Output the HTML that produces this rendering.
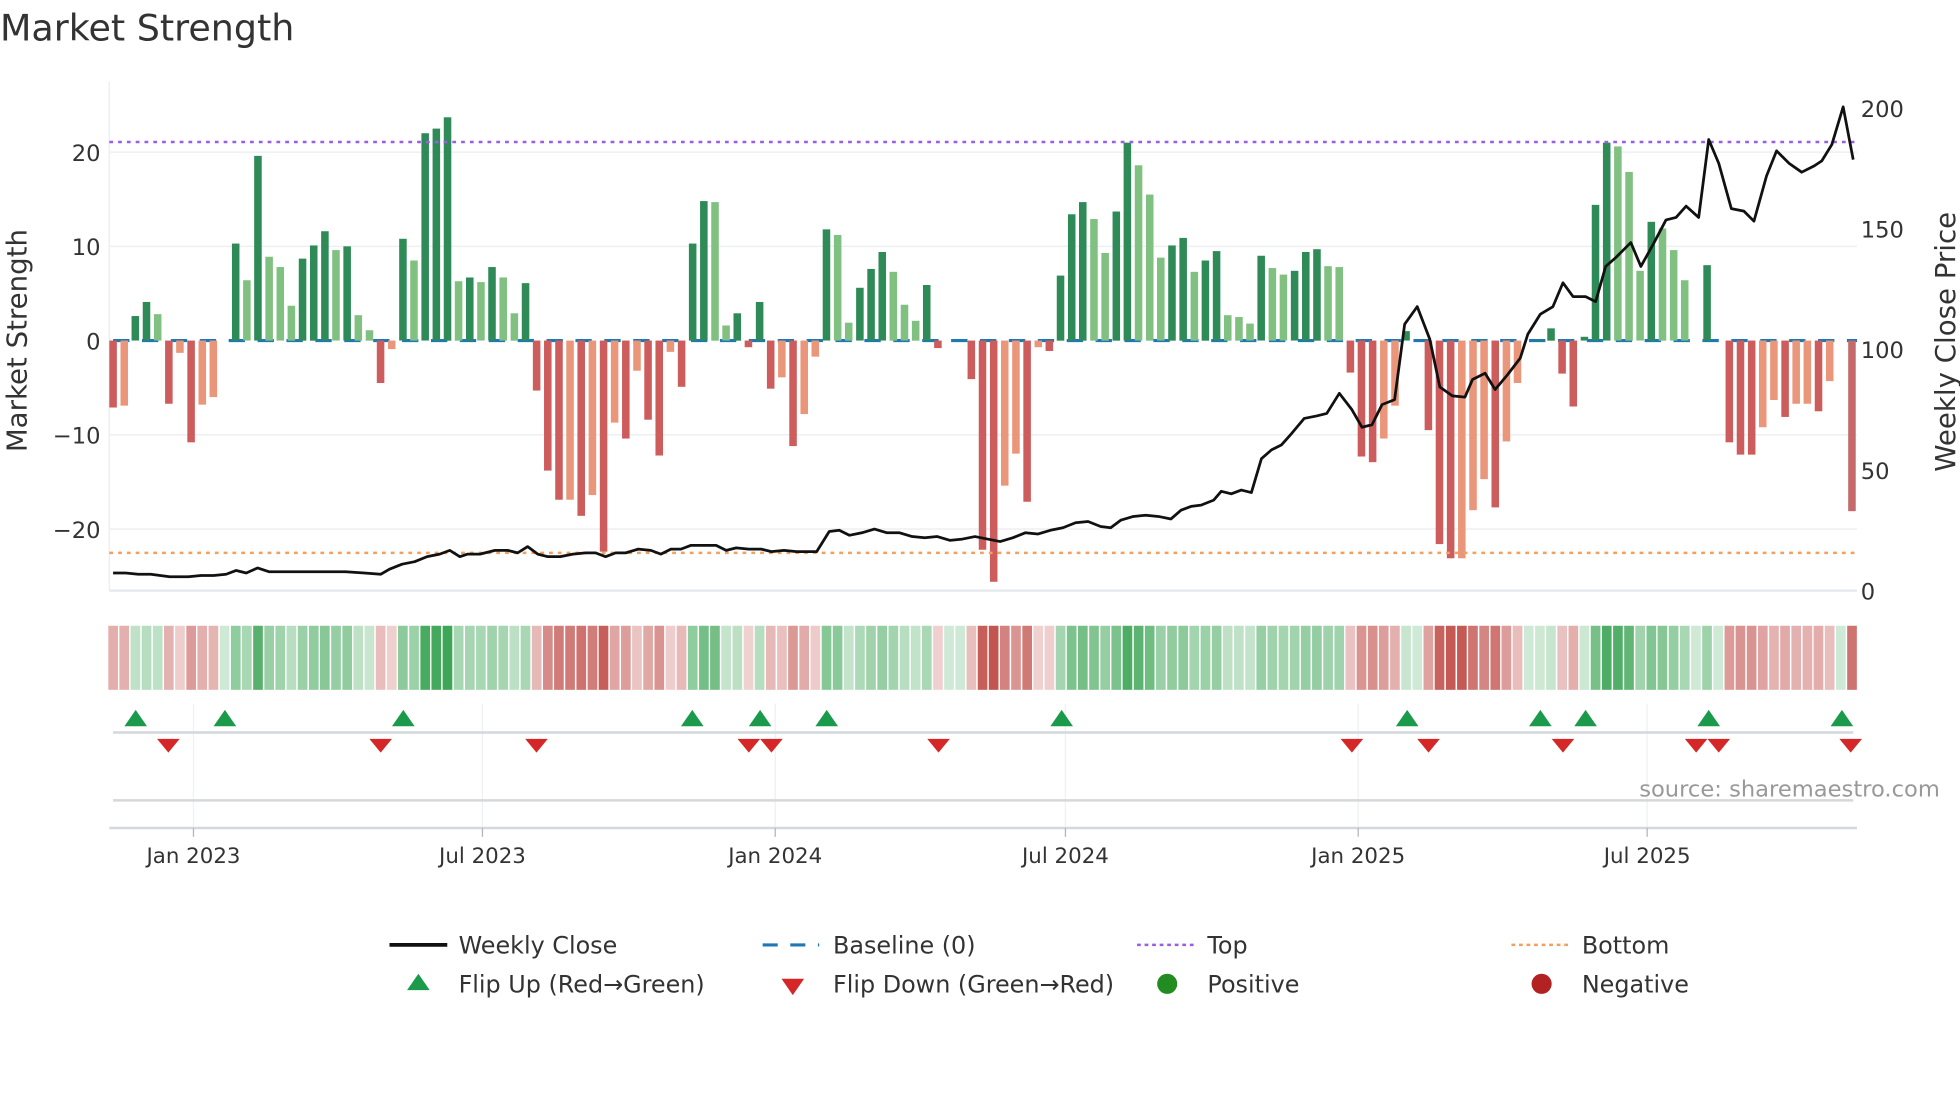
<!DOCTYPE html>
<html><head><meta charset="utf-8">
<style>
html,body{margin:0;padding:0;background:#fff;}
svg{display:block;font-family:"DejaVu Sans","Liberation Sans",sans-serif;}
</style></head>
<body>
<svg id="s" width="1960" height="1102" viewBox="0 0 1560 877" xmlns="http://www.w3.org/2000/svg">
<rect width="1560" height="877" fill="#fff"/>
<text x="0" y="32" font-size="29" fill="#333">Market Strength</text>
<g stroke="#edeff3" stroke-width="1.2">
<line x1="87" x2="1478" y1="121" y2="121"/><line x1="87" x2="1478" y1="196" y2="196"/>
<line x1="87" x2="1478" y1="346" y2="346"/><line x1="87" x2="1478" y1="421" y2="421"/>
<line x1="87" x2="87" y1="65" y2="470"/>
</g>
<line x1="87" x2="1478" y1="470" y2="470" stroke="#e6e9ee" stroke-width="2"/>
<g font-size="18" fill="#333" text-anchor="end">
<text x="80" y="128">20</text><text x="80" y="203">10</text><text x="80" y="278">0</text>
<text x="80" y="353">−10</text><text x="80" y="428">−20</text>
</g>
<g font-size="18" fill="#333">
<text x="1481" y="93">200</text><text x="1481" y="189">150</text><text x="1481" y="285">100</text>
<text x="1481" y="381">50</text><text x="1481" y="477">0</text>
</g>
<text transform="translate(21,271) rotate(-90)" font-size="22" fill="#333" text-anchor="middle">Market Strength</text>
<text transform="translate(1556,272) rotate(-90)" font-size="22" fill="#333" text-anchor="middle">Weekly Close Price</text>
<line x1="90" x2="1478" y1="271" y2="271" stroke="#1f77b4" stroke-width="2.5" stroke-dasharray="13 10"/>
<g id="bars"></g>
<line x1="87" x2="1478" y1="113" y2="113" stroke="#9b5de5" stroke-width="2" stroke-dasharray="3 4"/>
<line x1="87" x2="1478" y1="440" y2="440" stroke="#f0a060" stroke-width="2" stroke-dasharray="3 4"/>
<polyline id="price" fill="none" stroke="#111" stroke-width="2.2" stroke-linejoin="round"/>
<g id="strip"></g>
<g stroke="#eef0f3" stroke-width="1">
<line x1="154" x2="154" y1="560" y2="660"/><line x1="384" x2="384" y1="560" y2="660"/>
<line x1="617" x2="617" y1="560" y2="660"/><line x1="848" x2="848" y1="560" y2="660"/>
<line x1="1081" x2="1081" y1="560" y2="660"/><line x1="1311" x2="1311" y1="560" y2="660"/>
</g>
<line x1="90" x2="1475" y1="583" y2="583" stroke="#d4d7db" stroke-width="2"/>
<line x1="90" x2="1475" y1="637" y2="637" stroke="#d4d7db" stroke-width="2"/>
<line x1="87" x2="1478" y1="659" y2="659" stroke="#d4d7db" stroke-width="2"/>
<g id="tri"></g>
<g stroke="#b0b4ba" stroke-width="1">
<line x1="154" x2="154" y1="659" y2="666"/><line x1="384" x2="384" y1="659" y2="666"/>
<line x1="617" x2="617" y1="659" y2="666"/><line x1="848" x2="848" y1="659" y2="666"/>
<line x1="1081" x2="1081" y1="659" y2="666"/><line x1="1311" x2="1311" y1="659" y2="666"/>
</g>
<g font-size="17" fill="#333" text-anchor="middle">
<text x="154" y="687">Jan 2023</text><text x="384" y="687">Jul 2023</text><text x="617" y="687">Jan 2024</text>
<text x="848" y="687">Jul 2024</text><text x="1081" y="687">Jan 2025</text><text x="1311" y="687">Jul 2025</text>
</g>
<text x="1544" y="634" font-size="18" fill="#999" text-anchor="end">source: sharemaestro.com</text>
<g font-size="19" fill="#333">
<line x1="310" x2="356" y1="752" y2="752" stroke="#111" stroke-width="3"/>
<text x="365" y="759">Weekly Close</text>
<line x1="607" x2="652" y1="752" y2="752" stroke="#1f77b4" stroke-width="2.5" stroke-dasharray="12 10"/>
<text x="663" y="759">Baseline (0)</text>
<line x1="905" x2="950" y1="752" y2="752" stroke="#9b5de5" stroke-width="2" stroke-dasharray="3 3"/>
<text x="961" y="759">Top</text>
<line x1="1203" x2="1248" y1="752" y2="752" stroke="#f0a060" stroke-width="2" stroke-dasharray="3 3"/>
<text x="1259" y="759">Bottom</text>
<polygon points="333,775 342,788 324,788" fill="#1a9a4a"/>
<text x="365" y="790">Flip Up (Red→Green)</text>
<polygon points="622,779 640,779 631,792" fill="#d62728"/>
<text x="663" y="790">Flip Down (Green→Red)</text>
<circle cx="929" cy="783" r="8" fill="#228b22"/>
<text x="961" y="790">Positive</text>
<circle cx="1227" cy="783" r="8" fill="#b22222"/>
<text x="1259" y="790">Negative</text>
</g>
</svg>
<script>
var v="-7.1d,-6.9l,2.6d,4.1d,2.8l,-6.7d,-1.3l,-10.8d,-6.8l,-6l,0,10.3d,6.4l,19.6d,8.9l,7.8l,3.7l,8.7d,10.1d,11.6d,9.6l,10d,2.7l,1.1l,-4.5d,-0.9l,10.8d,8.5l,22d,22.5d,23.7d,6.3l,6.7d,6.2l,7.8d,6.7l,2.9l,6.1d,-5.3d,-13.8d,-16.9d,-16.9l,-18.6d,-16.4l,-22.4d,-8.7l,-10.4d,-3.2l,-8.4d,-12.2d,-1.2l,-4.9d,10.3d,14.8d,14.7l,1.6l,2.9d,-0.7d,4.1d,-5.1d,-3.9l,-11.2d,-7.8l,-1.7l,11.8d,11.2l,1.9l,5.6d,7.6d,9.4d,7.3l,3.8l,2.1l,5.9d,-0.8d,0,0,-4.1d,-22.2d,-25.6d,-15.4l,-12l,-17.1d,-0.7l,-1.1d,6.9d,13.4d,14.7d,12.9l,9.3l,13.7d,21d,18.6l,15.5l,8.8l,10.1d,10.9d,7.3l,8.5d,9.5d,2.7l,2.5l,1.8l,9d,7.7l,7l,7.4d,9.4d,9.7d,7.9l,7.8l,-3.4d,-12.3d,-12.9d,-10.4l,-6.9l,1d,0,-9.5d,-21.6d,-23.1d,-23.1l,-18l,-14.7l,-17.7d,-10.7l,-4.5l,0,0.1d,1.3d,-3.5d,-7d,0.4d,14.4d,21d,20.6l,17.9l,7.4l,12.6d,11.9l,9.6l,6.4l,0,8d,0,-10.8d,-12.1d,-12.1d,-9.2l,-6.3l,-8.1d,-6.7l,-6.7l,-7.5d,-4.3l,0,-18.1m".split(",");
var N=v.length,x0=90,x1=1474,st=(x1-x0)/(N-1),b="",s="";
function mix(c,t){var r=Math.round(255+(c[0]-255)*t),g=Math.round(255+(c[1]-255)*t),bb=Math.round(255+(c[2]-255)*t);return "rgb("+r+","+g+","+bb+")";}
for(var i=0;i<N;i++){var t=v[i],k=t.slice(-1),n=parseFloat(t),x=x0+i*st;
 if(isNaN(n))n=0;
 if(n!==0){var c;if(n>0)c=(k=="d")?"#2e8b57":"#80c080";else c=(k=="d")?"#cd5c5c":(k=="m"?"#c46a6a":"#e9967a");
 var y1=271-n*7.5;b+='<rect x="'+(x-3).toFixed(1)+'" y="'+Math.min(y1,271).toFixed(1)+'" width="6" height="'+Math.abs(n*7.5).toFixed(1)+'" fill="'+c+'"/>';}
 var a=Math.min(1,0.25+Math.abs(n)/24*0.75);var col=n>=0?mix([60,165,85],a):mix([195,85,80],a);
 s+='<rect x="'+(x-st/2+0.6).toFixed(1)+'" y="498" width="'+(st-1.2).toFixed(1)+'" height="51" fill="'+col+'"/>';}
document.getElementById("bars").innerHTML=b;document.getElementById("strip").innerHTML=s;
var p="90,456 100,456 110,457 120,457 135,459 150,459 160,458 170,458 180,457 188,454 196,456 205,452 214,455 230,455 245,455 260,455 275,455 290,456 303,457 310,453 320,449 330,447 340,443 350,441 358,438 366,443 372,441 382,441 394,438 404,438 412,440 420,435 428,441 436,443 446,443 456,441 466,440 474,440 482,443 490,440 498,440 508,437 518,438 526,441 534,437 542,437 550,434 560,434 570,434 578,438 586,436 596,437 606,437 614,439 624,438 634,439 650,439 660,423 668,422 676,426 686,424 696,421 706,424 716,424 726,427 736,428 746,427 756,430 766,429 776,427 786,429 796,431 806,428 816,424 826,425 836,422 846,420 856,416 866,415 876,419 884,420 892,414 902,411 912,410 922,411 932,413 940,406 948,403 956,402 966,398 972,391 980,393 988,390 996,392 1004,365 1012,358 1020,354 1028,345 1038,333 1048,331 1056,329 1066,313 1076,326 1084,340 1092,338 1100,322 1110,318 1118,258 1128,244 1138,270 1146,308 1156,315 1166,316 1172,302 1182,297 1190,310 1200,298 1210,285 1216,266 1226,250 1236,244 1244,225 1252,236 1262,236 1270,240 1278,212 1286,205 1298,193 1306,212 1316,194 1326,175 1334,173 1342,164 1352,173 1360,111 1368,130 1378,166 1388,168 1396,176 1406,140 1414,120 1424,130 1434,137 1444,132 1450,128 1458,115 1467,85 1475,127";
document.getElementById("price").setAttribute("points",p);
var up=[108,179,321,551,605,658,845,1120,1226,1262,1360,1466],dn=[134,303,427,596,614,747,1076,1137,1244,1350,1368,1473],tr="";
up.forEach(function(x){tr+='<polygon points="'+x+',565 '+(x+9)+',578 '+(x-9)+',578" fill="#1a9a4a"/>';});
dn.forEach(function(x){tr+='<polygon points="'+(x-9)+',588 '+(x+9)+',588 '+x+',599" fill="#d62728"/>';});
document.getElementById("tri").innerHTML=tr;
</script>
</body></html>
